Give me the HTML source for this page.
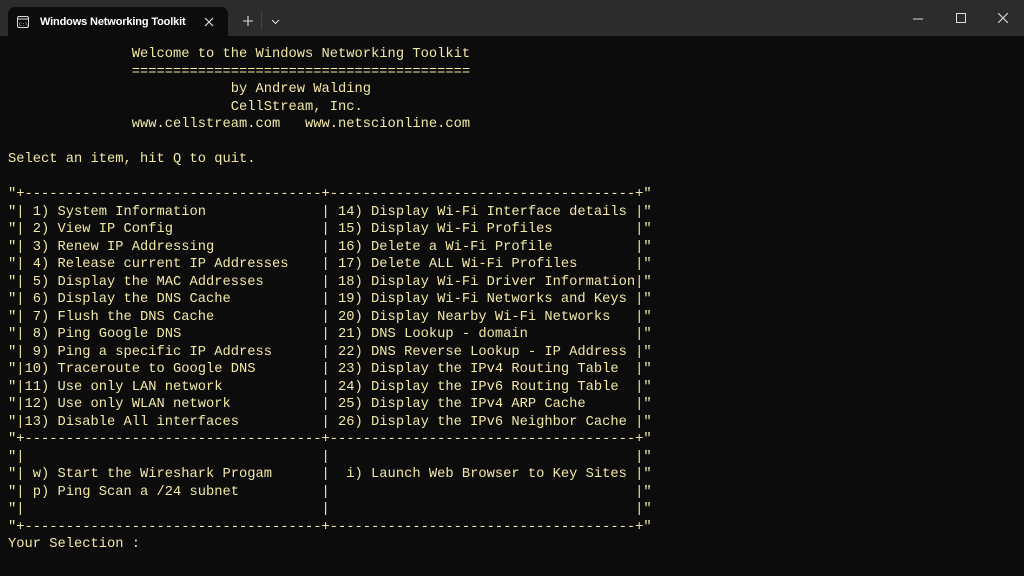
<!DOCTYPE html>
<html><head><meta charset="utf-8"><style>
*{margin:0;padding:0;box-sizing:border-box}
body{width:1024px;height:576px;background:#0c0c0c;overflow:hidden;position:relative;font-family:"Liberation Sans",sans-serif}
.bar{position:absolute;left:0;top:0;width:1024px;height:36px;background:#2c2c2c}
.tab{position:absolute;left:8px;top:7px;width:220px;height:30px;background:#0c0c0c;border-radius:7px 7px 0 0}
.tt{position:absolute;left:32px;top:9px;color:#fff;font-size:11px;font-weight:bold;letter-spacing:-0.15px}
pre{position:absolute;left:8px;top:46px;font-family:"Liberation Mono",monospace;font-size:13.75px;line-height:17.5px;color:#f2e8a6;white-space:pre}
</style></head><body>
<div class="bar"></div>
<div class="tab">
<svg style="position:absolute;left:9px;top:9px" width="12" height="12" viewBox="0 0 12 12"><rect x="0.5" y="0.5" width="11" height="11" rx="1.5" fill="none" stroke="#ddd"/><line x1="0.5" y1="3" x2="11.5" y2="3" stroke="#ddd"/><text x="2" y="10" font-size="5" fill="#ddd" font-family="Liberation Mono">C:\</text></svg>
<div class="tt">Windows Networking Toolkit</div>
<svg style="position:absolute;left:196px;top:10px" width="10" height="10"><path d="M1 1L9 9M9 1L1 9" stroke="#ddd" stroke-width="1.2"/></svg>
</div>
<svg style="position:absolute;left:243px;top:16px" width="10" height="10"><path d="M5 0V10M0 5H10" stroke="#ddd" stroke-width="1.1"/></svg>
<div style="position:absolute;left:261px;top:12px;width:1px;height:18px;background:#444"></div>
<svg style="position:absolute;left:271px;top:19px" width="9" height="6"><path d="M1 1L4.5 4.5L8 1" stroke="#ddd" fill="none" stroke-width="1.1"/></svg>
<svg style="position:absolute;left:913px;top:18px" width="10" height="2"><path d="M0 1H10" stroke="#ddd"/></svg>
<svg style="position:absolute;left:956px;top:13px" width="10" height="10"><rect x="0.5" y="0.5" width="9" height="9" fill="none" stroke="#ddd"/></svg>
<svg style="position:absolute;left:998px;top:13px" width="10" height="10"><path d="M0 0L10 10M10 0L0 10" stroke="#ddd" stroke-width="1.1"/></svg>
<pre>               Welcome to the Windows Networking Toolkit
               =========================================
                           by Andrew Walding
                           CellStream, Inc.
               www.cellstream.com   www.netscionline.com

Select an item, hit Q to quit.

"+------------------------------------+-------------------------------------+"
"| 1) System Information              | 14) Display Wi-Fi Interface details |"
"| 2) View IP Config                  | 15) Display Wi-Fi Profiles          |"
"| 3) Renew IP Addressing             | 16) Delete a Wi-Fi Profile          |"
"| 4) Release current IP Addresses    | 17) Delete ALL Wi-Fi Profiles       |"
"| 5) Display the MAC Addresses       | 18) Display Wi-Fi Driver Information|"
"| 6) Display the DNS Cache           | 19) Display Wi-Fi Networks and Keys |"
"| 7) Flush the DNS Cache             | 20) Display Nearby Wi-Fi Networks   |"
"| 8) Ping Google DNS                 | 21) DNS Lookup - domain             |"
"| 9) Ping a specific IP Address      | 22) DNS Reverse Lookup - IP Address |"
"|10) Traceroute to Google DNS        | 23) Display the IPv4 Routing Table  |"
"|11) Use only LAN network            | 24) Display the IPv6 Routing Table  |"
"|12) Use only WLAN network           | 25) Display the IPv4 ARP Cache      |"
"|13) Disable All interfaces          | 26) Display the IPv6 Neighbor Cache |"
"+------------------------------------+-------------------------------------+"
"|                                    |                                     |"
"| w) Start the Wireshark Progam      |  i) Launch Web Browser to Key Sites |"
"| p) Ping Scan a /24 subnet          |                                     |"
"|                                    |                                     |"
"+------------------------------------+-------------------------------------+"
Your Selection :</pre>
</body></html>
